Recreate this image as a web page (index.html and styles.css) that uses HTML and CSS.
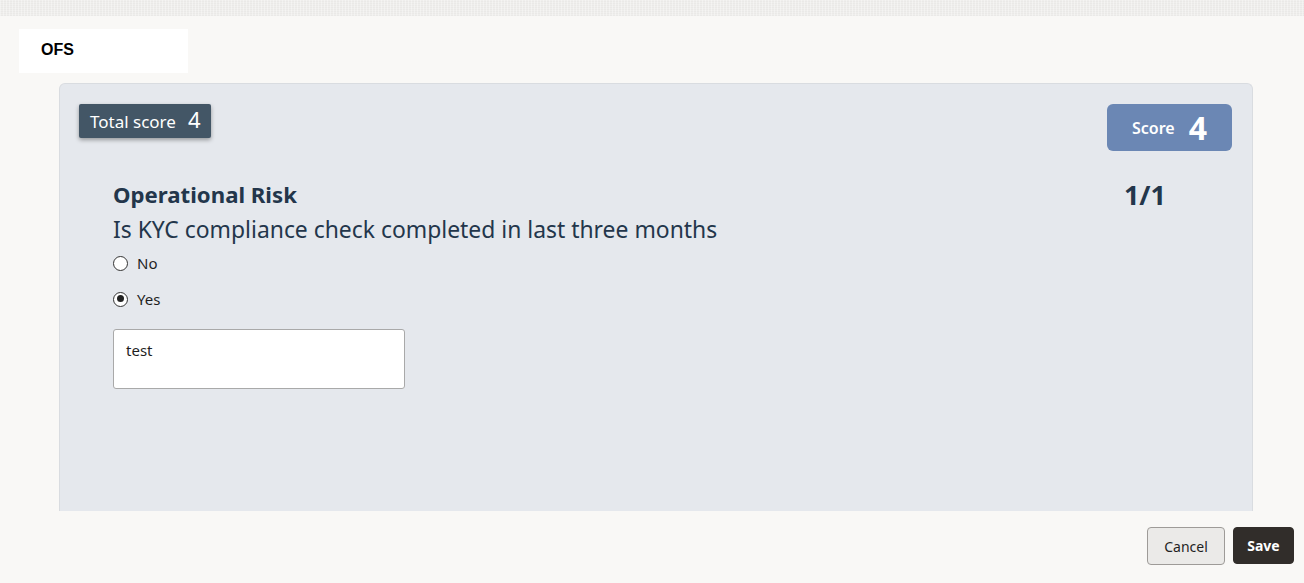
FILE: index.html
```html
<!DOCTYPE html>
<html>
<head>
<meta charset="utf-8">
<link rel="stylesheet" href="styles.css">
</head>
<body>
<div class="topband"></div>
<div class="page">
  <div class="brand">OFS</div>
  <div class="panel">
    <div class="panel-head">
      <div class="total">Total score <span class="total-num">4</span></div>
      <div class="score">Score <span class="score-num">4</span></div>
    </div>
    <div class="question">
      <div class="q-text">
        <div class="q-cat">Operational Risk</div>
        <div class="q-title">Is KYC compliance check completed in last three months</div>
        <label class="opt"><span class="radio"></span>No</label>
        <label class="opt"><span class="radio checked"></span>Yes</label>
        <div class="textarea">test</div>
      </div>
      <div class="counter">1/1</div>
    </div>
  </div>
  <div class="actions">
    <button class="btn cancel">Cancel</button>
    <button class="btn save">Save</button>
  </div>
</div>
</body>
</html>
```
FILE: styles.css
```css
html, body { margin: 0; padding: 0; }
body {
  background: #f9f8f6;
  font-family: "Noto Sans", "Open Sans", sans-serif;
  width: 1304px;
  height: 583px;
  overflow: hidden;
}
.topband {
  height: 16px;
  background-color: #efeeec;
  background-image: repeating-linear-gradient(90deg, rgba(255,255,255,0.35) 0 1px, transparent 1px 3px),
                    repeating-linear-gradient(0deg, rgba(0,0,0,0.02) 0 1px, transparent 1px 2px);
}
.page { display: flex; flex-direction: column; }
.brand {
  margin: 13px 0 0 19px;
  width: 169px;
  height: 44px;
  background: #ffffff;
  box-sizing: border-box;
  padding: 12px 0 0 22px;
  font-family: "Liberation Sans", Arial, sans-serif;
  font-weight: bold;
  font-size: 16px;
  color: #000;
}
.panel {
  margin: 10px 0 0 59px;
  width: 1194px;
  height: 428px;
  box-sizing: border-box;
  background: #e5e8ed;
  border: 1px solid #d9dce0;
  border-bottom: none;
  border-radius: 6px 6px 0 0;
  padding: 20px 20px 0 19px;
  display: flex;
  flex-direction: column;
}
.panel-head { display: flex; justify-content: space-between; align-items: flex-start; height: 47px; }
.total {
  height: 34px;
  box-sizing: border-box;
  padding: 0 11px;
  background: #435666;
  color: #fff;
  font-size: 17px;
  display: flex;
  align-items: center;
  border-radius: 2px;
  box-shadow: 0 2px 4px rgba(0,0,0,0.35);
}
.total-num { font-size: 22px; margin-left: 12px; position: relative; top: -2px; }
.score {
  width: 125px;
  height: 47px;
  box-sizing: border-box;
  background: #6b87b4;
  color: #fff;
  border-radius: 6px;
  display: flex;
  align-items: center;
  justify-content: center;
  font-size: 16px;
  font-weight: 600;
}
.score-num { font-size: 32px; font-weight: 700; margin-left: 14px; }
.question {
  display: flex;
  justify-content: space-between;
  padding: 28px 66px 0 34px;
}
.q-cat { color: #23364b; font-size: 22.2px; font-weight: 700; line-height: 32px; }
.q-title { color: #23364b; font-size: 22.9px; line-height: 38px; }
.counter { color: #23364b; font-size: 27px; font-weight: 700; line-height: 32px; padding-top: 0; }
.opt {
  display: flex;
  align-items: center;
  font-size: 15px;
  color: #1f1f1f;
  height: 36px;
}
.opt:first-of-type { margin-top: -4px; }
.radio {
  width: 15px;
  height: 15px;
  border: 1.3px solid #333;
  border-radius: 50%;
  margin-right: 9px;
  background: #fff;
  box-sizing: border-box;
  position: relative;
}
.radio.checked::after {
  content: "";
  position: absolute;
  left: 2.7px; top: 2.7px;
  width: 7px; height: 7px;
  border-radius: 50%;
  background: #222;
}
.textarea {
  margin-top: 12px;
  width: 292px;
  height: 60px;
  box-sizing: border-box;
  background: #fff;
  border: 1px solid #a9a9a9;
  border-radius: 3px;
  padding: 10px 12px;
  font-size: 15px;
  color: #1f1f1f;
}
.actions {
  display: flex;
  justify-content: flex-end;
  gap: 8px;
  padding: 16px 10px 0 0;
}
.btn {
  font-family: "Noto Sans", "Open Sans", sans-serif;
  font-size: 14px;
  height: 38px;
  border-radius: 4px;
  cursor: pointer;
}
.cancel {
  width: 78px;
  background: #ebeae8;
  border: 1px solid #9e9b98;
  color: #1f1f1f;
}
.save {
  width: 61px;
  height: 37px;
  background: #312d2a;
  border: 1px solid #312d2a;
  color: #fff;
  font-weight: 700;
}
```
